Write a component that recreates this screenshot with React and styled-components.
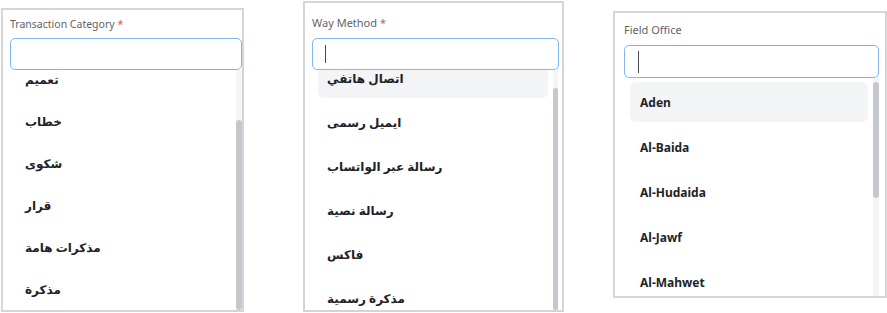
import styled, { createGlobalStyle } from 'styled-components'

const GlobalStyle = createGlobalStyle`
  body {
    margin: 0;
    background: #ffffff;
    font-family: "Noto Sans", "DejaVu Sans", sans-serif;
  }
`

const Row = styled.div`
  display: flex;
  align-items: flex-start;
  width: 887px;
  height: 313px;
  overflow: hidden;
`

const Panel = styled.div`
  box-sizing: border-box;
  width: ${(p) => p.$w}px;
  height: ${(p) => p.$h}px;
  margin-top: ${(p) => p.$top}px;
  margin-left: ${(p) => p.$left}px;
  padding: ${(p) => p.$pad};
  border: 2px solid #d5d5d5;
  background: #ffffff;
  display: flex;
  flex-direction: column;
  overflow: hidden;
`

const Label = styled.div`
  font-size: ${(p) => p.$size}px;
  line-height: 16px;
  color: #5f6368;
  margin-bottom: ${(p) => p.$gap}px;
  white-space: nowrap;
`

const Required = styled.span`
  color: #e05252;
  margin-left: 3px;
`

const Field = styled.div`
  box-sizing: border-box;
  height: ${(p) => p.$h}px;
  border: 1.5px solid #82b6ef;
  border-radius: 5px;
  background: #ffffff;
  display: flex;
  align-items: center;
  padding-left: ${(p) => p.$caretX}px;
  flex-shrink: 0;
`

const Caret = styled.span`
  width: 1px;
  height: ${(p) => p.$h}px;
  background: #4a4a4a;
`

const ListBox = styled.div`
  flex: 1;
  display: flex;
  overflow: hidden;
  min-height: 0;
`

const Items = styled.div`
  flex: 1;
  display: flex;
  flex-direction: column;
  gap: ${(p) => p.$gap}px;
  margin-top: ${(p) => p.$shift}px;
  padding: ${(p) => p.$pad};
`

const Item = styled.div`
  flex-shrink: 0;
  height: ${(p) => p.$h}px;
  display: flex;
  align-items: center;
  padding-left: ${(p) => p.$indent}px;
  border-radius: 6px;
  background: ${(p) => (p.$active ? '#f3f4f6' : 'transparent')};
  font-size: ${(p) => p.$size}px;
  font-weight: 700;
  color: #1f2328;
  white-space: nowrap;
`

const Track = styled.div`
  width: ${(p) => p.$w}px;
  margin-right: ${(p) => p.$gap}px;
  background: #f4f5f7;
  display: flex;
  flex-direction: column;
  flex-shrink: 0;
`

const Thumb = styled.div`
  margin-top: ${(p) => p.$from}px;
  height: ${(p) => p.$len}px;
  background: #c4c8cd;
  border-radius: 3px;
`

const panels = [
  {
    key: 'category',
    label: 'Transaction Category',
    labelSize: 10.5,
    required: true,
    box: { w: 243, h: 304, top: 8, left: 1, pad: '6px 0 0 7px' },
    labelGap: 6,
    fieldH: 32,
    caret: null,
    list: { shift: -12, gap: 0, pad: '0', itemH: 42, indent: 15, size: 12 },
    track: { w: 6, gap: 0, from: 50, len: 300 },
    items: ['تعميم', 'خطاب', 'شكوى', 'قرار', 'مذكرات هامة', 'مذكرة'],
    active: -1,
  },
  {
    key: 'method',
    label: 'Way Method',
    labelSize: 11,
    required: true,
    box: { w: 261, h: 311, top: 1, left: 59, pad: '12px 3px 0 7px' },
    labelGap: 7,
    fieldH: 32,
    caret: { x: 12, h: 18 },
    list: { shift: -12, gap: 4, pad: '0 5px 0 6px', itemH: 40, indent: 9, size: 12 },
    track: { w: 5, gap: 1, from: 18, len: 300 },
    items: ['اتصال هاتفي', 'ايميل رسمى', 'رسالة عبر الواتساب', 'رسالة نصية', 'فاكس', 'مذكرة رسمية'],
    active: 0,
  },
  {
    key: 'office',
    label: 'Field Office',
    labelSize: 11,
    required: false,
    box: { w: 274, h: 287, top: 11, left: 49, pad: '9px 6px 0 9px' },
    labelGap: 7,
    fieldH: 33,
    caret: { x: 13, h: 22 },
    list: { shift: 0, gap: 5, pad: '4px 5px 0 6px', itemH: 40, indent: 10, size: 12 },
    track: { w: 6, gap: 0, from: 4, len: 116 },
    items: ['Aden', 'Al-Baida', 'Al-Hudaida', 'Al-Jawf', 'Al-Mahwet'],
    active: 0,
  },
]

const App = () => {
  return (
    <>
      <GlobalStyle />
      <Row>
        {panels.map((p) => (
          <Panel key={p.key} $w={p.box.w} $h={p.box.h} $top={p.box.top} $left={p.box.left} $pad={p.box.pad}>
            <Label $gap={p.labelGap} $size={p.labelSize}>
              {p.label}
              {p.required && <Required>*</Required>}
            </Label>
            <Field $h={p.fieldH} $caretX={p.caret ? p.caret.x : 0}>
              {p.caret && <Caret $h={p.caret.h} />}
            </Field>
            <ListBox>
              <Items $shift={p.list.shift} $gap={p.list.gap} $pad={p.list.pad}>
                {p.items.map((name, i) => (
                  <Item
                    key={name}
                    $h={p.list.itemH}
                    $indent={p.list.indent}
                    $size={p.list.size}
                    $active={i === p.active}
                  >
                    {name}
                  </Item>
                ))}
              </Items>
              <Track $w={p.track.w} $gap={p.track.gap}>
                <Thumb $from={p.track.from} $len={p.track.len} />
              </Track>
            </ListBox>
          </Panel>
        ))}
      </Row>
    </>
  )
}

export default App
